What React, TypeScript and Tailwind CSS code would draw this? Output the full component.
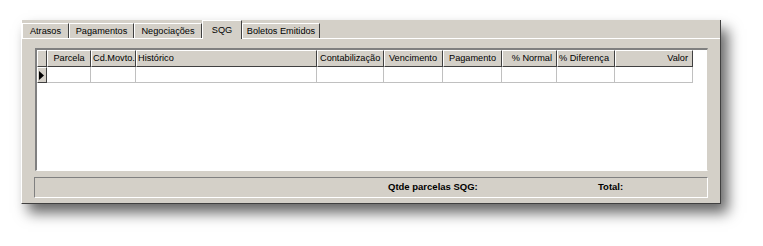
import React from "react";

const tabs = [
  { label: "Atrasos", w: "w-[47px]" },
  { label: "Pagamentos", w: "w-[65px]" },
  { label: "Negociações", w: "w-[68px]" },
  { label: "SQG", w: "w-[40px]", active: true },
  { label: "Boletos Emitidos", w: "w-[78px]" },
];

const columns = [
  { label: "Parcela", w: "w-[44px]", align: "justify-center" },
  { label: "Cd.Movto.", w: "w-[45px]", align: "justify-start pl-[1px]" },
  { label: "Histórico", w: "w-[181px]", align: "justify-start pl-[1px]" },
  { label: "Contabilização", w: "w-[67px]", align: "justify-start pl-[2px]" },
  { label: "Vencimento", w: "w-[59px]", align: "justify-start pl-[4px]" },
  { label: "Pagamento", w: "w-[59px]", align: "justify-center" },
  { label: "% Normal", w: "w-[55px]", align: "justify-end pr-[4px]" },
  { label: "% Diferença", w: "w-[58px]", align: "justify-start pl-[1px]" },
  { label: "Valor", w: "w-[78px]", align: "justify-end pr-[4px]" },
];

export default function App() {
  return (
    <div
      className="w-[763px] h-[246px] bg-white pt-[20px] pl-[21px] text-[9.2px] text-black"
      style={{ fontFamily: '"Liberation Sans", Arial, sans-serif' }}
    >
      {/* Window */}
      <div className="w-[700px] h-[184px] bg-[#d4d0c8] border-l border-white border-r border-b border-r-[#404040] border-b-[#404040] shadow-[7px_9px_13px_rgba(0,0,0,0.6)] flex flex-col">
        {/* Tabs */}
        <div className="h-[18px] flex items-end">
          {tabs.map((t) =>
            t.active ? (
              <div
                key={t.label}
                className={`${t.w} h-[19px] -mb-[1px] z-10 bg-[#d4d0c8] border-t border-l border-white border-r border-r-[#404040] flex items-start justify-center pt-[3px]`}
              >
                {t.label}
              </div>
            ) : (
              <div
                key={t.label}
                className={`${t.w} h-[15px] bg-[#d4d0c8] border-t border-l border-white border-r border-r-[#404040] flex items-center justify-center pt-[1px]`}
              >
                {t.label}
              </div>
            )
          )}
        </div>

        {/* Page */}
        <div className="flex-1 border-t border-white pl-[13px] pt-[9px] flex flex-col">
          {/* Grid */}
          <div className="w-[673px] h-[123px] bg-white border-l-2 border-t-2 border-l-[#808080] border-t-[#808080] border-r border-b border-r-[#d4d0c8] border-b-[#ffffff] flex flex-col">
            {/* Header */}
            <div className="flex h-[17px]">
              <div className="w-[10px] bg-[#d4d0c8] border-t border-l border-white border-r border-b border-r-[#404040] border-b-[#404040]" />
              {columns.map((c) => (
                <div
                  key={c.label}
                  className={`${c.w} bg-[#d4d0c8] border-t border-l border-white border-r border-b border-r-[#404040] border-b-[#404040] flex items-center whitespace-nowrap ${c.align}`}
                >
                  {c.label}
                </div>
              ))}
            </div>
            {/* Data row */}
            <div className="flex h-[16px]">
              <div className="w-[10px] bg-[#d4d0c8] border-t border-l border-white border-r border-b border-r-[#404040] border-b-[#404040] flex items-center pl-[1px]">
                <svg width="5" height="9" viewBox="0 0 5 9">
                  <path d="M0 0 L5 4.5 L0 9 Z" fill="#000" />
                </svg>
              </div>
              {columns.map((c) => (
                <div
                  key={c.label}
                  className={`${c.w} border-r border-b border-[#c0c0c0]`}
                />
              ))}
            </div>
          </div>

          {/* Status bar */}
          <div className="mt-[6px] -ml-[1px] w-[674px] h-[21px] border-t border-l border-[#808080] border-r border-b border-r-white border-b-white flex items-center font-bold text-[9.5px]">
            <span className="w-[563px] pl-[353px] whitespace-nowrap">Qtde parcelas SQG:</span>
            <span className="whitespace-nowrap">Total:</span>
          </div>
        </div>
      </div>
    </div>
  );
}
